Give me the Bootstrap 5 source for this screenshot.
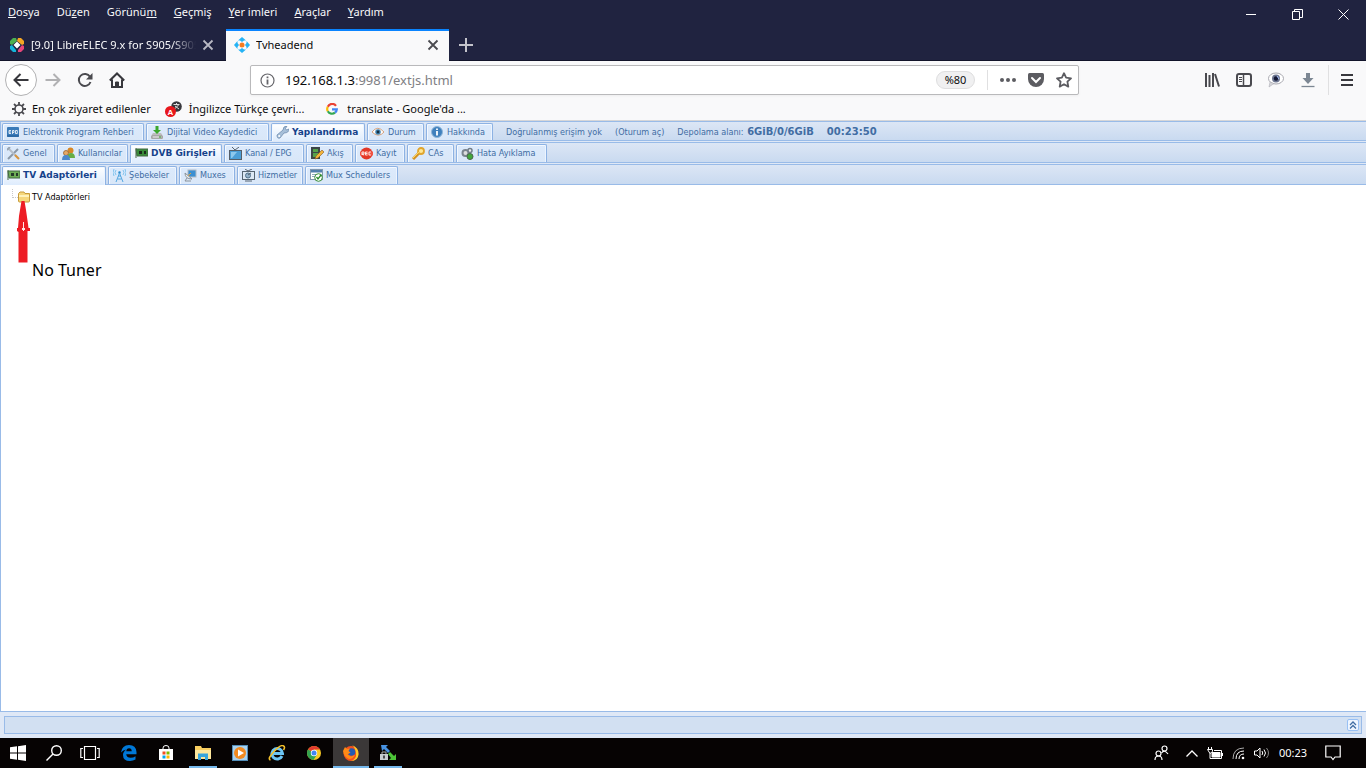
<!DOCTYPE html>
<html lang="tr">
<head>
<meta charset="utf-8">
<meta name="viewport" content="width=device-width, initial-scale=1">
<title>Tvheadend</title>
<link rel="stylesheet" href="https://cdn.jsdelivr.net/npm/bootstrap@5.3.0/dist/css/bootstrap.min.css">
<style>
body{font:11px/16px "Noto Sans","Open Sans",sans-serif;color:#0c0c0d;background:#f9f9fa}
button,input{font:inherit;color:inherit}
svg{display:block;flex:none}
.plain{background:none;border:0;padding:0;display:flex;align-items:center;justify-content:center;flex:none}
.winhead{background:#202340;color:#f9f9fa}
.menus{height:29px;padding:4px 0 9px 8px}
.menus nav{gap:17px}
.menus a{color:inherit;text-decoration:none}
.wincontrols{margin-top:-4px}
.wincontrols .plain{width:46px;height:28px}
.browser-tabs{height:32px;border-bottom:1px solid #12142a}
.btab{width:226px;height:32px;padding:0 9px;gap:6px}
.btab .cap{flex:1;overflow:hidden;white-space:nowrap}
.btab.fade-end{padding-right:12px}
.btab.fade-end .cap{-webkit-mask:linear-gradient(90deg,#000 85%,transparent);mask:linear-gradient(90deg,#000 85%,transparent)}
.btab.current{background:#f9f9fa;color:#0c0c0d;border-top:2px solid #0a84ff;width:223px;padding:0 10px 2px 8px}
.newtab{width:34px}
.navigation{height:38px;padding:0 5px}
.backbtn{width:32px;height:32px;border:1px solid #b1b1b3;border-radius:50%;background:#fff}
.navbtn{width:32px}
.toolbtn{width:24px}
.menubtn{width:28px}
.urlbar{height:30px;border:1px solid #b9b9bb;border-radius:2px;background:#fff;box-shadow:0 1px 3px #0000000d;margin:0 121px 0 117px;padding:0 6px 0 9px}
.address{position:relative;font-size:13px;line-height:20px;margin-left:10px}
.address input{border:0;outline:0;padding:0;width:100%;background:none;color:#808084}
.address .host{position:absolute;left:0;top:0;background:#fff;color:#0c0c0d;pointer-events:none}
.zoomlevel{border:1px solid #dededf;border-radius:9px;background:#f0f0f1;width:39px;height:18px}
.vline{width:1px;background:#e0e0e1}
.urlbar .vline{margin:0 12px}
.urlactions{gap:12px}
.bookmarks{height:22px;padding:0 12px 2px;gap:14px;border-bottom:1px solid #d6d6d8}
.bookmarks a{color:inherit;text-decoration:none;gap:6px;white-space:nowrap}
.bookmarks .far{margin-left:8px;gap:9px}
/* application */
.app{background:#dfe8f6;font:9px/12px "DejaVu Sans Condensed","DejaVu Sans",sans-serif;color:#416da3}
.strip{border:1px solid #99bbe8;border-right:0;background:linear-gradient(#dce6f5,#c9daf0);padding:1px 1px 0;height:20px;margin-bottom:1px}
.strip.tall{height:21px}
.tabset{display:grid;gap:2px;align-items:stretch}
.set-main{grid-template-columns:142px 123px 94px 57px 67px}
.set-config{grid-template-columns:53px 71px 92px 80px 47px 50px 47px 91px}
.set-dvb{grid-template-columns:104px 69px 56px 66px 93px}
.apptab{border:1px solid #8db2e3;border-bottom:0;border-radius:2px 2px 0 0;background:linear-gradient(#dceafc,#d9e7f8);box-shadow:inset 1px 1px #f3f8ff,inset -1px 0 #ecf4ff;color:#416da3;padding:0 0 0 4px;gap:3px;display:flex;align-items:center;white-space:nowrap;overflow:hidden}
.set-main .apptab{gap:4px}
.apptab.on{background:linear-gradient(#fff,#deecfd);color:#15428b;font-family:"DejaVu Sans",sans-serif;font-weight:700;margin-bottom:-1px;padding-bottom:1px;gap:3px}
.tall .apptab{padding-bottom:1px}
.tall .apptab.on{padding-bottom:2px}
.status a{color:inherit;text-decoration:none}
.status{gap:13px;padding-left:13px;white-space:nowrap}
.status strong{font:700 10px/12px "DejaVu Sans",sans-serif}
.status span strong{margin-left:1px}
.panel{background:#fff;border:1px solid #99bbe8;border-right:0;border-top:0;color:#000;margin-top:-1px;padding:4px 0 0 11px}
.treeline{width:6px;height:9px;border:dotted #c9c9c9;border-width:0 0 1px 1px;margin-bottom:6px}
.treename{margin-left:2px}
.marker{position:absolute;left:16px;top:16px}
.message{font:16px/24px "Noto Sans","Open Sans",sans-serif;margin:54px 0 0 20px}
.southbar{height:26px;padding:4px}
.southbar>div{border:1px solid #99bbe8;background:#d2e0f2;height:18px;padding-right:2px}
.collapse-btn{width:12px;height:12px;border:1px solid #98c0f4;border-radius:2px;background:#eef5ff}
.taskbar{height:30px;background:#060303;color:#fff}
.taskbar .plain{width:36px;height:30px}
.taskbar .apps{gap:1px;margin-left:3px}
.taskbar .open{border-bottom:2px solid #76b9ed;padding-top:2px}
.taskbar .plain.narrow{width:28px;margin:0 4px}
.taskbar .focused{background:#3b3838}
.tray{gap:9px}
.taskbar .notify{margin:0 15px 0 8px}
</style>
</head>
<body class="d-flex flex-column min-vh-100">
<header>
 <div class="winhead">
  <div class="menus d-flex justify-content-between align-items-start">
   <nav class="d-flex"><a href="#"><u>D</u>osya</a><a href="#">Dü<u>z</u>en</a><a href="#">Görünü<u>m</u></a><a href="#"><u>G</u>eçmiş</a><a href="#"><u>Y</u>er imleri</a><a href="#"><u>A</u>raçlar</a><a href="#"><u>Y</u>ardım</a></nav>
   <div class="wincontrols d-flex">
    <button class="plain" aria-label="Simge durumuna küçült"><svg width="11" height="11"><path d="M0 5.500h10" stroke="#fff"/></svg></button>
    <button class="plain" aria-label="Geri yükle"><svg width="11" height="11" fill="none" stroke="#fff"><path d="M.5 2.500h7v8h-7zM2.500 2.500v-2h8v8h-3"/></svg></button>
    <button class="plain" aria-label="Kapat"><svg width="11" height="11" stroke="#fff"><path d="M.5.5l10 10m0-10l-10 10"/></svg></button>
   </div>
  </div>
  <div class="browser-tabs d-flex align-items-start">
   <div class="btab fade-end d-flex align-items-center">
    <svg width="16" height="16" viewBox="0 0 16 16"><path d="M7 1L4 1 1 4v3l2 1 5-4z" fill="#4caf50"/><path d="M9 1h3l3 3v3l-2 1-5-4z" fill="#f5a623"/><path d="M1 9v3l3 3h3V13L3 8z" fill="#14b4d8"/><path d="M15 9v3l-3 3H9V13l4-5z" fill="#e8457a"/><path d="M8 4.500L11.500 8 8 11.500 4.500 8z" fill="#fff"/></svg>
    <span class="cap">[9.0] LibreELEC 9.x for S905/S905</span>
    <button class="plain" aria-label="Sekmeyi kapat"><svg width="12" height="12" stroke="#b9b9c3" stroke-width="1.800"><path d="M1.500 1.500l9 9m0-9l-9 9"/></svg></button>
   </div>
   <div class="btab current d-flex align-items-center">
    <svg width="16" height="16" viewBox="0 0 16 16"><path d="M8 0l4 3.500H10L8 5 6 3.500H4zM8 16l4-3.500H10L8 11l-2 1.500H4zM0 8l3.500-4v2L5 8l-1.500 2v2zM16 8l-3.500-4v2L11 8l1.500 2v2z" fill="#25b3f5"/><circle cx="8" cy="8" r="2.500" fill="#f57c1f"/></svg>
    <span class="cap">Tvheadend</span>
    <button class="plain" aria-label="Sekmeyi kapat"><svg width="12" height="12" stroke="#4a4a4f" stroke-width="1.800"><path d="M1.500 1.500l9 9m0-9l-9 9"/></svg></button>
   </div>
   <button class="plain newtab h-100" aria-label="Yeni sekme"><svg width="14" height="14" stroke="#c3c3cb" stroke-width="2"><path d="M7 0v14M0 7h14"/></svg></button>
  </div>
 </div>
 <div class="navigation d-flex align-items-center">
  <div class="d-flex align-items-center">
   <button class="plain backbtn" aria-label="Geri"><svg width="16" height="14" fill="none" stroke="#38383d" stroke-width="2"><path d="M15.500 7H1.500M7.500 1l-6 6 6 6"/></svg></button>
   <button class="plain navbtn" aria-label="İleri"><svg width="16" height="14" fill="none" stroke="#b1b1b3" stroke-width="2"><path d="M.5 7h14M8.500 1l6 6-6 6"/></svg></button>
   <button class="plain navbtn" aria-label="Yenile"><svg width="16" height="16" fill="none" stroke="#4a4a4f" stroke-width="2"><path d="M13.500 10A6 6 0 1 1 13 4.800"/><path d="M15.500 1v6.500H9z" fill="#4a4a4f" stroke="none"/></svg></button>
   <button class="plain navbtn" aria-label="Başlangıç"><svg width="16" height="16" fill="none" stroke="#38383d" stroke-width="2"><path d="M.8 8.500L8 1.500l7.200 7M3 7.500V15h10V7.500"/><path d="M6.500 15v-5h3v5" fill="#38383d" stroke-width="1"/></svg></button>
  </div>
  <div class="urlbar d-flex align-items-center flex-grow-1">
   <svg width="15" height="15" fill="none" stroke="#66666b"><circle cx="7.500" cy="7.500" r="6.500" stroke-width="1.200"/><path d="M7.500 3.500v1.800M7.500 6.500v5" stroke-width="1.800"/></svg>
   <div class="address flex-grow-1"><input aria-label="Adres" value="192.168.1.3:9981/extjs.html"><span class="host">192.168.1.3</span></div>
   <button class="plain zoomlevel">%80</button>
   <span class="vline align-self-stretch my-1"></span>
   <div class="urlactions d-flex align-items-center">
   <button class="plain" aria-label="Eylemler"><svg width="16" height="4" fill="#5c5c61"><circle cx="2" cy="2" r="2"/><circle cx="8" cy="2" r="2"/><circle cx="14" cy="2" r="2"/></svg></button>
   <button class="plain" aria-label="Pocket"><svg width="16" height="14"><path d="M1.500 0h13Q16 0 16 1.500V6a8 8 0 0 1-16 0V1.500Q0 0 1.500 0z" fill="#5c5c61"/><path d="M4 5l4 4 4-4" fill="none" stroke="#fff" stroke-width="2" stroke-linecap="round"/></svg></button>
   <button class="plain" aria-label="Yer imi"><svg width="16" height="16" viewBox="0 0 16 16"><path d="M8 1.200l2.100 4.500 4.900.6-3.600 3.400.9 4.900L8 12.200l-4.300 2.400.9-4.900L1 6.300l4.900-.6z" fill="none" stroke="#5c5c61" stroke-width="1.800" stroke-linejoin="round"/></svg></button>
   </div>
  </div>
  <div class="d-flex align-items-center align-self-stretch">
   <button class="plain toolbtn" aria-label="Kitaplık"><svg width="16" height="14" fill="none" stroke="#4a4a4f" stroke-width="2"><path d="M2 0v14M5.500 2v12M9 0v14M11 1l4 12.500"/></svg></button>
   <button class="plain toolbtn ms-2" aria-label="Kenar çubuğu"><svg width="16" height="14" fill="none" stroke="#4a4a4f"><rect x="1" y="1" width="14" height="12" rx="2" stroke-width="2"/><path d="M7.500 1v12" stroke-width="1.500"/><path d="M3 4.500h3M3 6.500h3M3 8.500h3"/></svg></button>
   <button class="plain toolbtn ms-2" aria-label="Eklenti"><svg width="16" height="16"><ellipse cx="8" cy="6.500" rx="7.500" ry="5.500" fill="#fff" stroke="#a7a7ae"/><path d="M2 10l-1 5 5-3.500z" fill="#d5d5d9" stroke="#a7a7ae" stroke-width=".5"/><circle cx="8" cy="6.500" r="4" fill="#6d7690"/><circle cx="8" cy="6.500" r="2.200" fill="#121735"/><path d="M9 4l2 3" stroke="#aac4ff"/></svg></button>
   <button class="plain toolbtn ms-2" aria-label="İndirmeler"><svg width="14" height="16"><path d="M5 1h4v5h3.500L7 12 1.500 6H5z" fill="#7c8793"/><path d="M.5 14.500h13" stroke="#7c8793" stroke-width="1.300"/></svg></button>
   <span class="vline align-self-stretch my-1 ms-2 me-1"></span>
   <button class="plain menubtn" aria-label="Menü"><svg width="12" height="12" stroke="#38383d" stroke-width="2"><path d="M0 1h12M0 6h12M0 11h12"/></svg></button>
  </div>
 </div>
 <div class="bookmarks d-flex align-items-center">
  <a class="d-flex align-items-center" href="#"><svg width="14" height="14" fill="none" stroke="#4a4a4f"><circle cx="7" cy="7" r="4" stroke-width="1.600"/><path d="M7 0v3M7 11v3M0 7h3M11 7h3M2 2l2.200 2.200M9.800 9.800L12 12M12 2L9.800 4.200M4.200 9.800L2 12" stroke-width="1.800"/></svg>En çok ziyaret edilenler</a>
  <a class="d-flex align-items-center" href="#"><svg width="18" height="16" font-family="Liberation Sans" font-weight="700" fill="#fff"><circle cx="11.500" cy="5.500" r="5.300" fill="#38383d"/><path d="M8.500 3.500h6M11.500 2v2M9.500 8l4-4M10 5l4 3" stroke="#ddd" fill="none"/><circle cx="5.500" cy="10.500" r="5.500" fill="#e8171c"/><text x="2.500" y="13.500" font-size="8">A</text></svg>İngilizce Türkçe çevri...</a>
  <a class="far d-flex align-items-center" href="#"><svg width="12" height="12" viewBox="0 0 12 12" fill="none" stroke-width="2.200"><path d="M10 2.800A4.800 4.800 0 0 0 1.800 3.700" stroke="#ea4335"/><path d="M1.800 3.700a4.800 4.800 0 0 0 0 4.600" stroke="#fbbc05"/><path d="M1.800 8.300A4.800 4.800 0 0 0 9 9.700" stroke="#34a853"/><path d="M9 9.700a4.800 4.800 0 0 0 1.800-3.400H6" stroke="#4285f4"/></svg>translate - Google'da ...</a>
 </div>
</header>

<main class="app flex-grow-1 d-flex flex-column">
 <div class="strip d-flex">
  <div class="tabset set-main">
   <button class="apptab"><svg width="12" height="12"><rect y="1" width="12" height="10" rx="1" fill="#3a7ab8"/><path d="M0 10h12" stroke="#205a94"/><path d="M4 4.500H2v3h2M2 6h2M5.500 8V4.500h1.500v2H5.500M8.500 4.500h1.800v3H8.500z" fill="none" stroke="#fff" stroke-width=".8"/></svg>Elektronik Program Rehberi</button>
   <button class="apptab"><svg width="12" height="13"><path d="M2 7h8l2 3v3H0v-3z" fill="#bdbdbd"/><path d="M1 10h10v2H1z" fill="#efefef" stroke="#777" stroke-width=".6"/><path d="M4.500 0h3v4H10L6 8 2 4h2.500z" fill="#3ba82c"/><path d="M8 11h2" stroke="#2b9a22"/></svg>Dijital Video Kaydedici</button>
   <button class="apptab on"><svg width="13" height="13"><path d="M1 9l6-5q0-4 4-4L9.500 2.500l1 1.500L13 3q0 4-5 4l-4 5Q1 13 1 9z" fill="#a6bfd9" stroke="#6484a9" stroke-width=".7"/><circle cx="3.200" cy="10" r="1" fill="#fff"/></svg>Yapılandırma</button>
   <button class="apptab"><svg width="12" height="12" viewBox="0 0 13 12"><path d="M0 6q6-8 13 0-6 7-13 0z" fill="#fff" stroke="#d29a72"/><circle cx="6.500" cy="6" r="3" fill="#4486b3"/><circle cx="6.500" cy="6" r="1.500" fill="#163044"/></svg>Durum</button>
   <button class="apptab"><svg width="12" height="12"><circle cx="6" cy="6" r="5.500" fill="#3f80bd" stroke="#8fb5d8"/><path d="M6 2.500v1.500M6 5v4.500" stroke="#fff" stroke-width="1.800"/></svg>Hakkında</button>
  </div>
  <div class="status d-flex align-items-center"><span>Doğrulanmış erişim yok</span><a href="#">(Oturum aç)</a><span>Depolama alanı: <strong>6GiB/0/6GiB</strong></span><strong>00:23:50</strong></div>
 </div>
 <div class="strip tall d-flex">
  <div class="tabset set-config">
   <button class="apptab"><svg width="13" height="13" stroke-width="2"><path d="M1 12L11 2" stroke="#8a98a8"/><path d="M2 2l9 9" stroke="#b4bdc8"/><path d="M8 8l4 4" stroke="#d9953c"/><path d="M0 3l3-3" stroke="#98a4b1"/></svg>Genel</button>
   <button class="apptab"><svg width="13" height="13"><circle cx="8.500" cy="3.500" r="3" fill="#d78827"/><path d="M5 11q0-5 4-5t4 5z" fill="#67ad45"/><circle cx="4" cy="6" r="2.500" fill="#e6aa68" stroke="#97622f" stroke-width=".8"/><path d="M0 13q0-5 4-5t4 5z" fill="#4b88cc"/></svg>Kullanıcılar</button>
   <button class="apptab on"><svg width="13" height="12"><path d="M1 1v10M1 2h12v7H2z" fill="#398c3a" stroke="#426942"/><path d="M4 4h3v3H4zM9 4h2v3H9z" fill="#192b1b"/></svg>DVB Girişleri</button>
   <button class="apptab"><svg width="13" height="13"><path d="M3 0l3 3 4-3" fill="none" stroke="#5b646e"/><rect x=".5" y="3.500" width="12" height="9" fill="#4b9ed7" stroke="#555e68"/><path d="M2 5h6L3 11H2z" fill="#8dc8ed"/></svg>Kanal / EPG</button>
   <button class="apptab"><svg width="13" height="13"><path d="M0 0h9v12H0z" fill="#3e4648"/><path d="M2 2h5v3H2zM2 6h5v4H2z" fill="#55a14a"/><path d="M4 12l1-3 6-6 2 2-6 6z" fill="#f2b43a" stroke="#875924" stroke-width=".6"/></svg>Akış</button>
   <button class="apptab"><svg width="13" height="13"><circle cx="6.500" cy="6.500" r="6" fill="#e33827"/><path d="M0 4.500h13v4H0z" fill="#f15342"/><path d="M2 8V5h2v2H2l2 1M5.500 5v3H7.500M7.500 5h-2M5.500 6.500h2M11 5H9v3h2" stroke="#fff" stroke-width=".8" fill="none"/></svg>Kayıt</button>
   <button class="apptab"><svg width="13" height="13"><path d="M1 12l7-7" stroke="#d39124" stroke-width="3"/><circle cx="9" cy="4" r="3" fill="#ffe792" stroke="#e0a52e" stroke-width="1.800"/><path d="M1 11l6-6" stroke="#ffda5d"/></svg>CAs</button>
   <button class="apptab"><svg width="13" height="13"><circle cx="4.500" cy="6" r="3" fill="#ddd" stroke="#7b858e" stroke-width="2"/><circle cx="9" cy="3.500" r="2" fill="#eee" stroke="#727e8a" stroke-width="1.500"/><circle cx="9" cy="9.500" r="3" fill="#42a83b" stroke="#4c644c"/></svg>Hata Ayıklama</button>
  </div>
 </div>
 <div class="strip tall d-flex">
  <div class="tabset set-dvb">
   <button class="apptab on"><svg width="13" height="12"><path d="M1 1v10M1 2h12v7H2z" fill="#6eae55" stroke="#426942"/><path d="M4 4h3v3H4zM9 4h2v3H9z" fill="#263c28"/></svg>TV Adaptörleri</button>
   <button class="apptab"><svg width="13" height="13" fill="none" stroke="#53a6df"><path d="M3 13l3.500-9L10 13M4.500 10h4M5 7h3"/><path d="M3 1q-2 2.500 0 5M10 1q2 2.500 0 5M1 0q-2 4 0 7M12 0q2 4 0 7" stroke="#81c3ed"/><circle cx="6.500" cy="3.500" r="1" fill="#318bc7"/></svg>Şebekeler</button>
   <button class="apptab"><svg width="13" height="13"><rect x="4" y="1" width="8" height="7" fill="#3b8fd1" stroke="#b1bac4"/><path d="M1 4q0 6 7 6z" fill="#eef1f3" stroke="#8a939b"/><path d="M3 9l-2 3h6" fill="none" stroke="#8a939b"/><path d="M4 7l3-3" stroke="#e9a43a"/></svg>Muxes</button>
   <button class="apptab"><svg width="13" height="13"><path d="M3 0l3 2 4-2" stroke="#5b6570" fill="none"/><rect x=".5" y="2.500" width="12" height="8" fill="#dce8f4" stroke="#566572"/><circle cx="6" cy="6.500" r="2.500" fill="#94b2ca" stroke="#53738d"/><path d="M6 6l3-2M3 12h7" stroke="#566572"/></svg>Hizmetler</button>
   <button class="apptab"><svg width="13" height="13"><rect x=".5" y=".5" width="12" height="10" fill="#fff" stroke="#8297ad"/><path d="M1 1h11v2.500H1z" fill="#527fad"/><path d="M2 5.500h5M2 7.500h4" stroke="#8fa7bd"/><circle cx="8.500" cy="8.500" r="3.800" fill="#fff" stroke="#378c36"/><path d="M6.500 8L8 10l3-4" fill="none" stroke="#298c2a" stroke-width="1.300"/></svg>Mux Schedulers</button>
  </div>
 </div>
 <section class="panel flex-grow-1 position-relative">
  <div class="d-flex align-items-center"><span class="treeline"></span><svg width="12" height="12"><path d="M.5 10V2.500L2 1h4l1 1.500h4.500V10q0 1-1 1h-9q-1 0-1-1z" fill="#f6d77c" stroke="#c79b3a"/><path d="M1 5h10" stroke="#fff2ba" stroke-width="2"/></svg><span class="treename">TV Adaptörleri</span></div>
  <svg class="marker" width="13" height="62"><path d="M4.500 0H7.500L9 9l2 14 .5 4H13v3h-2.500v31.500H1.500V31L0 30v-3h1l1-12z" fill="#ed1c24"/><path d="M6.500 21v9M5.500 27v2M7.500 27v2" stroke="#fff" stroke-width=".9"/></svg>
  <p class="message">No Tuner</p>
 </section>
 <div class="southbar"><div class="d-flex justify-content-end align-items-center"><button class="plain collapse-btn" aria-label="Genişlet"><svg width="8" height="8" fill="none" stroke="#416da3" stroke-width="1.300"><path d="M1 4l3-3 3 3M1 7.500l3-3 3 3"/></svg></button></div></div>
</main>

<footer class="taskbar d-flex justify-content-between">
 <div class="d-flex">
  <button class="plain" aria-label="Başlat"><svg width="16" height="16" fill="#fff"><path d="M0 2.300l7-1v6.200H0zM8 1.200L16 0v7.500H8zM0 8.500h7v6.200l-7-1zM8 8.500h8V16l-8-1.200z"/></svg></button>
  <button class="plain" aria-label="Ara"><svg width="16" height="16" fill="none" stroke="#fff" stroke-width="1.400"><circle cx="10.500" cy="5.500" r="4.800"/><path d="M7 9L.5 15.500"/></svg></button>
  <button class="plain" aria-label="Görev görünümü"><svg width="20" height="16" fill="none" stroke="#fff" stroke-width="1.200"><path d="M4.500 1.500h11v13h-11zM3 3.500H.8v9H3M17 3.500h2.200v9H17"/></svg></button>
  <div class="apps d-flex">
   <button class="plain" aria-label="Edge"><svg width="16" height="16" viewBox="0 0 16 16"><path d="M0 7.500Q1 0 8 0t7.500 7v2.300H5.200q.5 3.500 4.500 3.500 2.600 0 4.800-1.500v3.300Q12 16 9 16 2 16 2 10q0-3.500 3.500-5.500Q2 5 0 7.500zM5.300 6.300h5.400q0-3-2.600-3T5.300 6.300z" fill="#0078d7"/></svg></button>
   <button class="plain" aria-label="Mağaza"><svg width="16" height="16"><path d="M5 5V3q0-2.500 3-2.500T11 3v2" fill="none" stroke="#fff"/><path d="M1 4h14v11H1z" fill="#fff"/><path d="M4.500 6.500h3v3h-3z" fill="#f25022"/><path d="M8.500 6.500h3v3h-3z" fill="#7fba00"/><path d="M4.500 10.500h3v3h-3z" fill="#00a4ef"/><path d="M8.500 10.500h3v3h-3z" fill="#ffb900"/></svg></button>
   <button class="plain open narrow" aria-label="Dosya Gezgini"><svg width="16" height="16"><path d="M0 1h6l1 2h9v11H0z" fill="#f9cf61"/><path d="M0 5h16v9H0z" fill="#fde79c"/><path d="M3 15V8.500h10V15h-3v-3H6v3z" fill="#36a5dd"/></svg></button>
   <button class="plain" aria-label="Medya oynatıcı"><svg width="16" height="16"><rect x=".5" y=".5" width="15" height="15" fill="#a8d1ee" stroke="#528db8"/><circle cx="8" cy="8" r="6" fill="#f18a20"/><path d="M6 4.500v7L12 8z" fill="#fff"/></svg></button>
   <button class="plain" aria-label="Internet Explorer"><svg width="18" height="16" viewBox="0 0 18 16"><path d="M14 11A5.300 5.300 0 1 1 14.500 8.500H5" fill="none" stroke="#6cc5f5" stroke-width="3"/><path d="M2.500 15Q-1 14 6 6.500T15.500 1q2 .8 0 4" fill="none" stroke="#f3c02c" stroke-width="1.600"/></svg></button>
   <button class="plain" aria-label="Chrome"><svg width="14" height="14" viewBox="0 0 14 14"><circle cx="7" cy="7" r="7" fill="#f9c823"/><path d="M7 7L1 3.500A7 7 0 0 1 13 3.500H7z" fill="#e33b2e"/><path d="M1 3.500A7 7 0 0 0 6.500 14L10 8.500 7 7z" fill="#31a350"/><circle cx="7" cy="7" r="3.200" fill="#fff"/><circle cx="7" cy="7" r="2.500" fill="#4285f4"/></svg></button>
   <button class="plain open focused" aria-label="Firefox"><svg width="16" height="16" viewBox="0 0 16 16"><circle cx="8" cy="8.500" r="7.500" fill="#f6511d"/><path d="M9 0q7 3 6.500 9.500T8 16q6-2 5-8T9 0z" fill="#ffc927"/><circle cx="8.500" cy="7" r="3.800" fill="#245bb2"/><path d="M0 6l2-4 2 2 3-.5L5.500 6l2 1.500-3 2L8 11.500l4-1.500q-2 4-6 4Q1 12 0 6z" fill="#ff8a16"/></svg></button>
   <button class="plain open narrow" aria-label="Uzak bağlantı"><svg width="17" height="16"><path d="M1 0h7L6 2l4 4-2 2-4-4-2 2z" fill="#4792e2"/><path d="M16 15H9l2-2-3-4 2-2 4 4 2-2z" fill="#4cc438"/><path d="M0 9h8v6H0z" fill="#c7cbd0"/><path d="M2 9V7h4v2" fill="none" stroke="#aaa"/><path d="M4 10.500v3" stroke="#222" stroke-width="1.500"/></svg></button>
  </div>
 </div>
 <div class="d-flex align-items-center">
  <div class="tray d-flex align-items-center">
  <svg class="me-2" width="15" height="16" fill="none" stroke="#fff" stroke-width="1.200"><circle cx="10.500" cy="3.500" r="2.500"/><path d="M7.500 8q3-4 6.500 1"/><circle cx="4.500" cy="8.500" r="2.500"/><path d="M1 15q0-4 3.500-4T8 15"/></svg>
  <svg width="12" height="7" fill="none" stroke="#fff" stroke-width="1.300"><path d="M.5 6.500L6 1l5.500 5.500"/></svg>
  <svg width="16" height="13" fill="none" stroke="#fff"><path d="M1.500 0v2M4.500 0v2M.5 2.500h5v2L3 6.500zM3 6v5.500h11.500v-8H7M15.500 6v3"/><path d="M5 5.500h8V10H5z" fill="#fff"/></svg>
  <svg width="13" height="13" fill="none" stroke="#fff"><path d="M1 12Q1 1 12 1" stroke="#aaa"/><path d="M4 12q0-8 8-8M7 12q0-5 5-5"/><circle cx="11" cy="11" r="1.300" fill="#fff" stroke="none"/></svg>
  <svg width="16" height="12" fill="none" stroke="#fff"><path d="M.5 4h2.500L6 1v10L3 8H.5zM8 4q1.500 2 0 4M10 2.500q3 3.500 0 7"/><path d="M12.500 1q4 5 0 10" stroke="#888"/></svg>
  <time>00:23</time></div>
  <button class="plain notify" aria-label="Bildirimler"><svg width="16" height="16" fill="none" stroke="#fff" stroke-width="1.200"><path d="M.8 1h14.400v11H10l-2 2.500L6 12H.8z"/></svg></button>
 </div>
</footer>
<script src="https://cdn.jsdelivr.net/npm/bootstrap@5.3.0/dist/js/bootstrap.bundle.min.js"></script>
</body>
</html>
